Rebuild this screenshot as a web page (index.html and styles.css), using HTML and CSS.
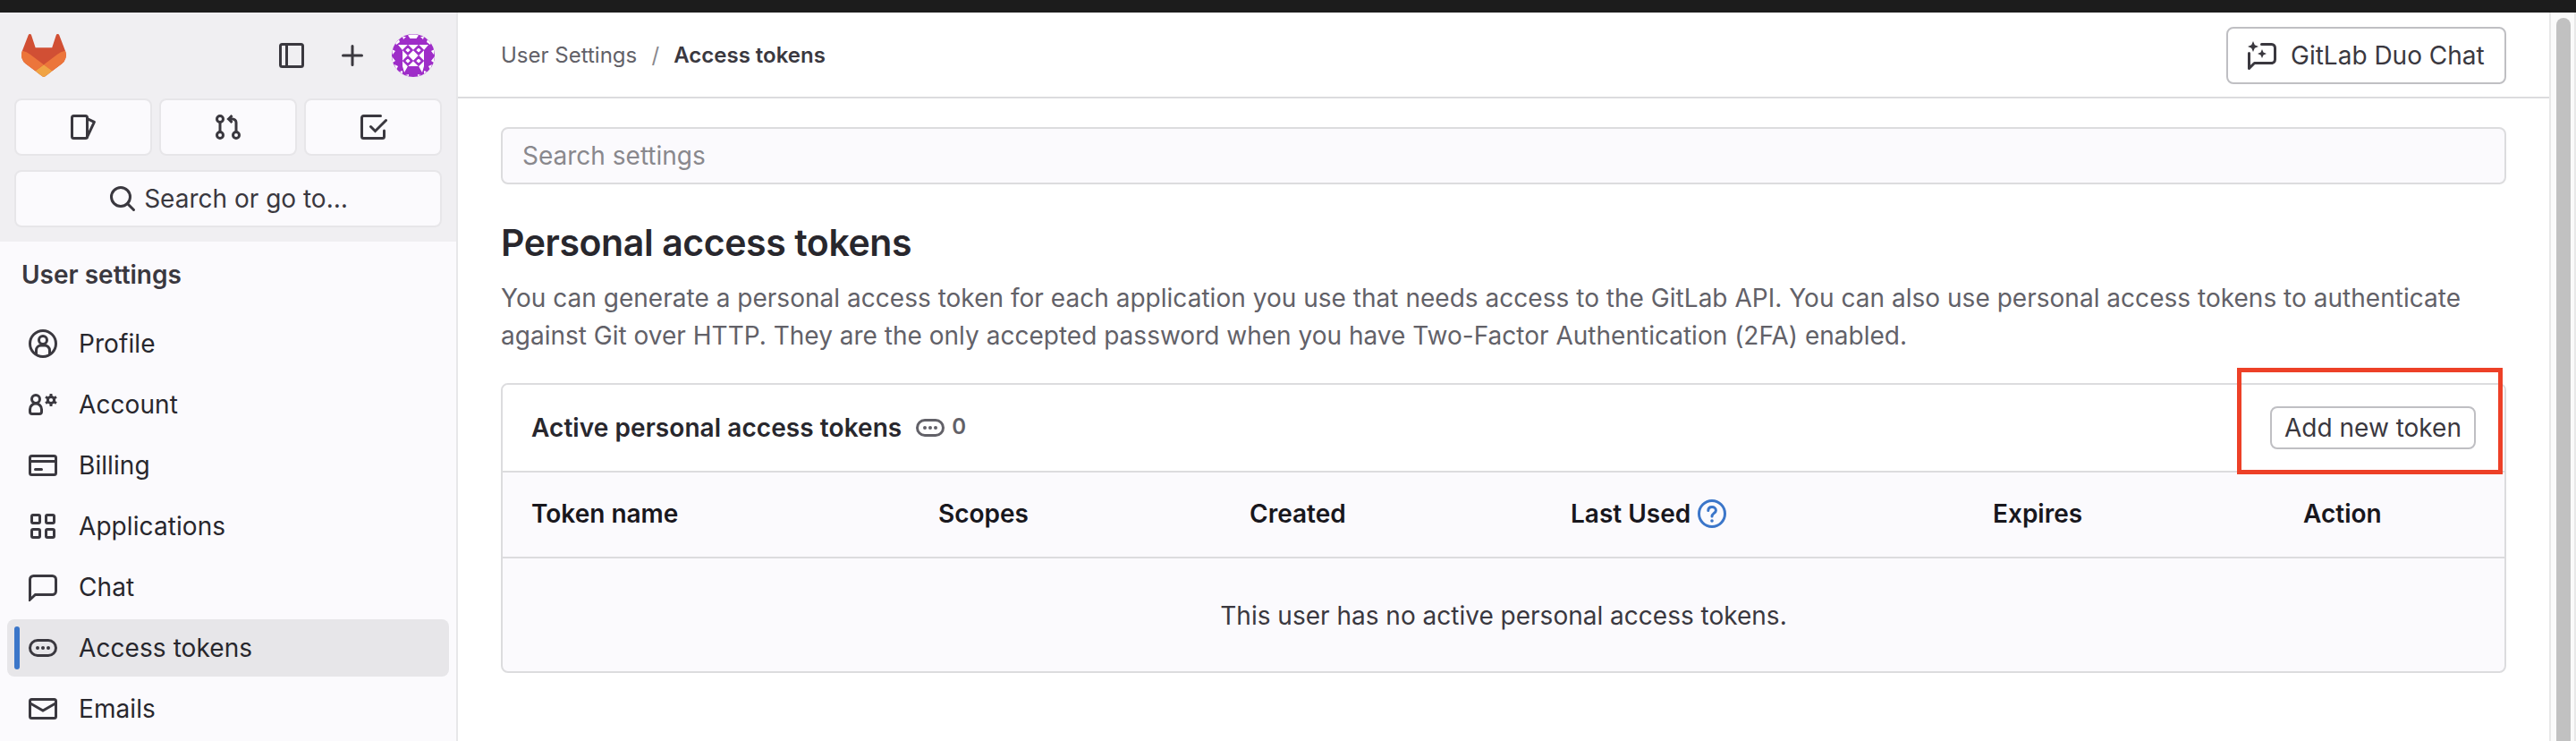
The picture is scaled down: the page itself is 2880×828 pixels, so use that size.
FILE: index.html
```html
<!DOCTYPE html>
<html lang="en">
<head>
<meta charset="utf-8">
<title>Access tokens</title>
<link rel="stylesheet" href="styles.css">
</head>
<body>
<div class="window-edge"></div>
<div class="layout">
  <aside class="sidebar">
    <div class="sidebar-top">
      <div class="brand-row">
        <svg class="logo" viewBox="0 0 25 24"><path d="m24.507 9.5-.034-.09L21.082.562a.896.896 0 0 0-1.694.091l-2.29 7.01H7.825L5.535.653a.898.898 0 0 0-1.694-.09L.451 9.411.416 9.5a6.297 6.297 0 0 0 2.09 7.278l.012.01.03.022 5.16 3.867 2.56 1.935 1.554 1.176a1.051 1.051 0 0 0 1.268 0l1.555-1.176 2.56-1.935 5.197-3.89.014-.01A6.297 6.297 0 0 0 24.507 9.5Z" fill="#d14f34"/><path d="m24.507 9.5-.034-.09a11.44 11.44 0 0 0-4.56 2.051l-7.447 5.632 4.742 3.584 5.197-3.89.014-.01A6.297 6.297 0 0 0 24.507 9.5Z" fill="#ec753b"/><path d="m7.707 20.677 2.56 1.935 1.555 1.176a1.051 1.051 0 0 0 1.268 0l1.555-1.176 2.56-1.935-4.743-3.584-4.755 3.584Z" fill="#f0a445"/><path d="M5.01 11.461a11.43 11.43 0 0 0-4.56-2.05L.416 9.5a6.297 6.297 0 0 0 2.09 7.278l.012.01.03.022 5.16 3.867 4.745-3.584-7.444-5.632Z" fill="#ec753b"/></svg>
        <svg class="icon panel" viewBox="0 0 16 16"><rect x="1.75" y="1.75" width="12.5" height="12.5" rx="1"/><path d="M5.25 2v12"/></svg>
        <svg class="icon plus" viewBox="0 0 16 16"><path d="M8 2.75v10.5M2.75 8h10.5" stroke-linecap="round"/></svg>
        <svg class="avatar" viewBox="0 0 48 48"><defs><clipPath id="round"><circle cx="24" cy="24" r="24"/></clipPath></defs><g clip-path="url(#round)"><path fill="#9e2dc8" d="M0 0h48v48H0z"/><path fill="#fff" d="M12 12h24v24H12zM7 12h5v6zM41 12h-5v6zM12 36h6l-4 7zM36 36h-6l4 7zM18 1.500l3-1h6l3 1-2.500 3.500h-7zM12 3l4 0-3 3zM36 3l-4 0 3 3zM4 10l4-4 1 3-4 3zM44 10l-4-4-1 3 4 3zM0 17l4 2-3 4zM48 17l-4 2 3 4zM0 25l4 5-3 2zM48 25l-4 5 3 2zM3 34l4 2-2 4zM45 34l-4 2 2 4zM9 42l3-1v4zM39 42l-3-1v4zM15 46l4-1v2zM33 46l-4-1v2z"/><path fill="#fff" stroke="#9e2dc8" stroke-width="2.5" d="m18 13.500 4.500 4.500-4.500 4.500-4.500-4.500zM30 13.500l4.500 4.500-4.500 4.500-4.500-4.500zM18 25.500l4.500 4.500-4.500 4.500-4.500-4.500zM30 25.500l4.500 4.500-4.500 4.500-4.500-4.500z"/></g></svg>
      </div>
      <div class="counters">
        <a class="tile"><svg class="icon" viewBox="0 0 16 16"><rect x="1.75" y="1.75" width="8.5" height="12.5" rx="1"/><path d="M10.500 3.400 14.200 5.200 10 14" stroke-linejoin="round"/></svg></a>
        <a class="tile"><svg class="icon" viewBox="0 0 16 16"><circle cx="3.500" cy="3.500" r="1.750"/><circle cx="3.500" cy="12.500" r="1.750"/><circle cx="12.500" cy="12.500" r="1.750"/><path d="M3.500 5.250v5.500M12.500 10.750V5.500a2 2 0 0 0-2-2H8.500M10.250 1.500 8.250 3.500l2 2"/></svg></a>
        <a class="tile"><svg class="icon" viewBox="0 0 16 16"><path d="M12.250 1.750h-9.500a1 1 0 0 0-1 1v10.500a1 1 0 0 0 1 1h10.500a1 1 0 0 0 1-1V10M6.750 7.750l2.500 2.500 6-6" stroke-linecap="round"/></svg></a>
      </div>
      <a class="search-go"><svg class="icon" viewBox="0 0 16 16"><circle cx="7" cy="7" r="5.250"/><path d="m10.750 10.750 3.500 3.500" stroke-linecap="round"/></svg><span>Search or go to…</span></a>
    </div>
    <h2 class="nav-title">User settings</h2>
    <nav class="nav">
      <a class="item"><svg class="icon" viewBox="0 0 16 16"><circle cx="8" cy="8" r="7.250"/><circle cx="8" cy="6" r="2.250"/><path d="M4.250 14v-2.250A2.750 2.750 0 0 1 7 9h2a2.750 2.750 0 0 1 2.750 2.750V14"/></svg><span>Profile</span></a>
      <a class="item"><svg class="icon" viewBox="0 0 16 16"><circle cx="4" cy="5" r="2.250"/><path d="M.750 12v-1.250a3.250 3.250 0 0 1 6.500 0V12a1.250 1.250 0 0 1-1.250 1.250H2A1.250 1.250 0 0 1 .750 12z"/><circle cx="12.500" cy="5.500" r="1.800"/><path d="M12.500 2v1.500m0 4V9M9.500 3.750l1.300.75m3.400 2 1.300.75m-6 0 1.300-.75m3.400-2 1.300-.75"/></svg><span>Account</span></a>
      <a class="item"><svg class="icon" viewBox="0 0 16 16"><rect x=".75" y="2.750" width="14.500" height="10.500" rx="1"/><path d="M1 5.750h14"/><path d="M3.750 10.250h3.500" stroke-linecap="round"/></svg><span>Billing</span></a>
      <a class="item"><svg class="icon" viewBox="0 0 16 16"><rect x="1.750" y="1.750" width="4.500" height="4.500" rx=".75"/><rect x="9.750" y="1.750" width="4.500" height="4.500" rx=".75"/><rect x="1.750" y="9.750" width="4.500" height="4.500" rx=".75"/><rect x="9.750" y="9.750" width="4.500" height="4.500" rx=".75"/></svg><span>Applications</span></a>
      <a class="item"><svg class="icon" viewBox="0 0 16 16"><path d="M.750 15V3.750a2 2 0 0 1 2-2h10.500a2 2 0 0 1 2 2v6.500a2 2 0 0 1-2 2H3.750z"/></svg><span>Chat</span></a>
      <a class="item active"><svg class="icon" viewBox="0 0 16 16"><rect x=".75" y="3.750" width="14.500" height="8.500" rx="4.250"/><g class="dots"><circle cx="5" cy="8" r="1"/><circle cx="8" cy="8" r="1"/><circle cx="11" cy="8" r="1"/></g></svg><span>Access tokens</span></a>
      <a class="item"><svg class="icon" viewBox="0 0 16 16"><rect x=".75" y="2.750" width="14.500" height="10.500" rx="1"/><path d="m1 5 7 4 7-4"/></svg><span>Emails</span></a>
    </nav>
  </aside>
  <main class="main">
    <header class="topbar">
      <div class="crumbs"><a class="crumb">User Settings</a><span class="slash">/</span><a class="current">Access tokens</a></div>
      <button class="duo"><svg class="icon" viewBox="0 0 16 16"><path d="M7.750 1.750h5.500a2 2 0 0 1 2 2v6.500a2 2 0 0 1-2 2H3.750L.750 15.200V6.750" stroke-linecap="round" stroke-linejoin="round"/><path class="solid" d="M3 0l.9 2.100L6 3l-2.100.9L3 6l-.9-2.100L0 3l2.100-.9zM8 4.500l.750 1.750L10.500 7l-1.750.750L8 9.500l-.750-1.750L5.500 7l1.750-.750z"/></svg><span>GitLab Duo Chat</span></button>
    </header>
    <div class="content">
      <div class="settings-search">Search settings</div>
      <h1 class="title">Personal access tokens</h1>
      <p class="lead"><span class="line1">You can generate a personal access token for each application you use that needs access to the GitLab API. You can also use personal access tokens to authenticate</span><br><span class="line2">against Git over HTTP. They are the only accepted password when you have Two-Factor Authentication (2FA) enabled.</span></p>
      <section class="card">
        <div class="card-head">
          <h3 class="card-title">Active personal access tokens</h3>
          <svg class="icon count-icon" viewBox="0 0 16 16"><rect x=".75" y="3.750" width="14.500" height="8.500" rx="4.250"/><g class="dots"><circle cx="5" cy="8" r="1"/><circle cx="8" cy="8" r="1"/><circle cx="11" cy="8" r="1"/></g></svg>
          <span class="count">0</span>
          <button class="add">Add new token</button>
          <div class="highlight"></div>
        </div>
        <div class="row head">
          <span>Token name</span><span>Scopes</span><span>Created</span><span class="last">Last Used<svg class="icon help" viewBox="0 0 16 16"><circle cx="8" cy="8" r="7.250"/><path d="M5.900 6.300C5.900 5 6.800 4.250 8 4.250s2.200.8 2.200 1.950C10.200 7.600 8 7.800 8 9.500" stroke-linecap="round"/><circle class="solid" cx="8" cy="12" r=".9"/></svg></span><span>Expires</span><span>Action</span>
        </div>
        <div class="empty"><span>This user has no active personal access tokens.</span></div>
      </section>
    </div>
  </main>
  <div class="scrollbar"><div class="thumb"></div></div>
</div>
</body>
</html>
```
FILE: styles.css
```css
* { box-sizing: border-box; }
body { margin: 0; width: 2880px; height: 828px; overflow: hidden; background: #fff; font-family: Inter, "Liberation Sans", sans-serif; font-size: 28px; line-height: 42px; color: #3a383f; }
h1, h2, h3, p { margin: 0; }
button { font: inherit; color: inherit; background: #fff; margin: 0; padding: 0; }
.window-edge { height: 14px; background: #1c1c1c; }
.layout { display: flex; height: 814px; }
.icon { width: 32px; height: 32px; flex: none; fill: none; stroke: #3a383f; stroke-width: 1.5; }
.solid, .dots { fill: #3a383f; stroke: none; }

.sidebar { width: 512px; flex: none; border-right: 2px solid #e7e7e9; background: #fbfafd; overflow: hidden; }
.sidebar-top { height: 256px; background: #f0eff2; padding: 24px 16px 0; }
.brand-row { display: flex; align-items: center; height: 48px; padding: 0 8px; }
.logo { width: 50px; height: 48px; }
.panel { margin-left: auto; }
.plus { margin-left: 36px; }
.avatar { width: 48px; height: 48px; margin-left: 28px; }
.counters { display: flex; gap: 8px; margin-top: 24px; }
.tile, .search-go { height: 64px; border: 2px solid #e7e6e9; border-radius: 8px; background: #fbfafd; display: flex; align-items: center; justify-content: center; }
.tile { flex: 1; }
.search-go { margin-top: 16px; gap: 8px; }
.nav-title { font-size: 28px; font-weight: 600; padding: 16px 0 0 24px; height: 82px; }
.nav { padding: 0 8px; display: flex; flex-direction: column; gap: 4px; }
.item { height: 64px; padding-left: 24px; display: flex; align-items: center; gap: 24px; border-radius: 8px; color: #28272d; letter-spacing: .08px; }
.item.active { background: #e7e6e9; padding-left: 8px; }
.active::before { content: ""; width: 6px; height: 48px; border-radius: 3px; background: #3b76c9; margin-right: -14px; }

.main { width: 2338px; flex: none; }
.topbar { height: 96px; border-bottom: 2px solid #dcdcde; padding: 2px 48px 0; display: flex; justify-content: space-between; align-items: center; }
.crumbs { font-size: 24px; line-height: 32px; display: flex; color: #626168; }
.slash { width: 41px; text-align: center; color: #89888d; }
.current { color: #3a383f; font-weight: 600; }
.duo { width: 313px; height: 64px; border: 2px solid #bfbfc3; border-radius: 8px; display: flex; align-items: center; padding-left: 22px; gap: 16px; }
.content { padding: 32px 48px 0; }
.settings-search { height: 64px; border: 2px solid #dcdcde; border-radius: 8px; background: #fbfafd; color: #89888d; padding: 9px 22px; }
.title { font-size: 41px; line-height: 50px; font-weight: 600; letter-spacing: -.01em; color: #28272d; margin-top: 40px; }
.lead { color: #626168; margin-top: 16px; white-space: nowrap; }
.line1 { letter-spacing: .025px; }
.line2 { letter-spacing: .01px; }
.card { height: 324px; margin-top: 32px; border: 2px solid #dcdcde; border-radius: 8px; background: #fbfafd; }
.card-head { position: relative; height: 98px; border-bottom: 2px solid #dcdcde; border-radius: 6px 6px 0 0; background: #fff; display: flex; align-items: center; padding: 0 32px; }
.card-title { font-size: 28px; font-weight: 600; letter-spacing: .07px; color: #28272d; }
.count-icon { margin-left: 16px; stroke: #626168; }
.count-icon .dots { fill: #626168; }
.count { font-size: 24px; font-weight: 600; color: #626168; margin-left: 8px; padding-bottom: 2px; }
.add { margin-left: auto; width: 230px; height: 48px; border: 2px solid #bfbfc3; border-radius: 8px; line-height: 42px; }
.highlight { position: absolute; left: 1939px; top: -19px; width: 297px; height: 119px; border: 5px solid #ed4027; }
.row { display: grid; grid-template-columns: 455px 348px 359px 472px 347px 1fr; height: 96px; align-items: center; padding: 0 32px 2px; border-bottom: 2px solid #dcdcde; font-weight: 600; color: #18171d; }
.last { display: flex; align-items: center; gap: 8px; }
.help { stroke: #3b76c9; }
.help .solid { fill: #3b76c9; }
.empty { height: 126px; padding-top: 2px; display: flex; align-items: center; justify-content: center; }

.scrollbar { width: 30px; height: 814px; border: solid #e8e8e8; border-width: 0 2px; background: #fafafa; padding: 6px 4px 0 6px; }
.thumb { height: 808px; border-radius: 8px 8px 0 0; background: #c1c1c1; }
```
